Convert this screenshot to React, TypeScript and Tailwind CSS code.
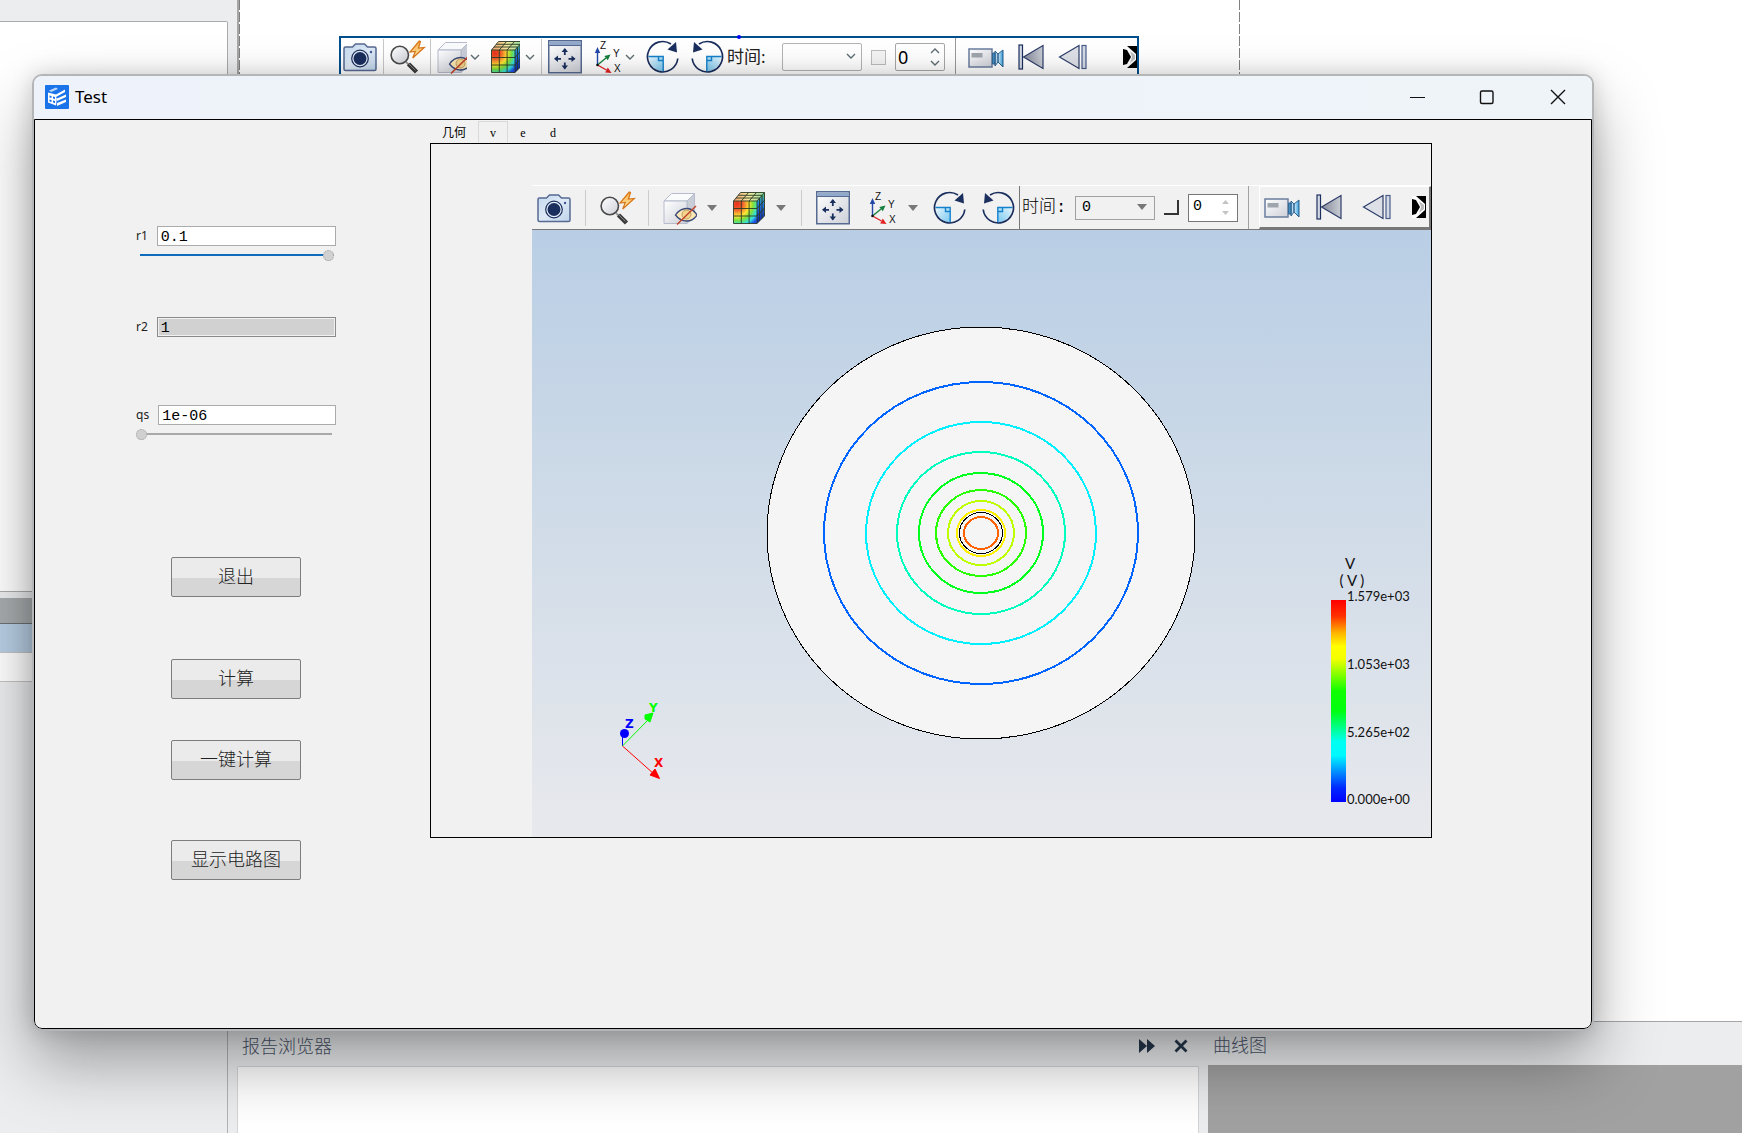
import { useState } from 'react'
import type { ReactNode } from 'react'

const NAVY = '#1b2f5e'

const Defs = () => (
  <svg width="0" height="0" className="absolute" aria-hidden="true">
    <defs>
      <linearGradient id="steel" x1="0" y1="0" x2="1" y2="1">
        <stop offset="0" stopColor="#c3d8ef" />
        <stop offset="0.5" stopColor="#dfeaf6" />
        <stop offset="1" stopColor="#bdd3ea" />
      </linearGradient>
      <linearGradient id="silver" x1="0" y1="0" x2="1" y2="1">
        <stop offset="0" stopColor="#ffffff" />
        <stop offset="1" stopColor="#cdd0d8" />
      </linearGradient>
      <linearGradient id="metal" x1="0" y1="0" x2="1" y2="0">
        <stop offset="0" stopColor="#84889a" />
        <stop offset="1" stopColor="#c9cdd4" />
      </linearGradient>
      <linearGradient id="lens" x1="0" y1="0" x2="1" y2="0">
        <stop offset="0" stopColor="#2b8cc4" />
        <stop offset="0.5" stopColor="#e8f7ff" />
        <stop offset="1" stopColor="#2d9ad8" />
      </linearGradient>
      <linearGradient id="quad" x1="0" y1="0" x2="1" y2="1">
        <stop offset="0" stopColor="#e3f4fd" />
        <stop offset="1" stopColor="#79c8f0" />
      </linearGradient>
      <linearGradient id="bolt" x1="0" y1="0" x2="0" y2="1">
        <stop offset="0" stopColor="#f7b04a" />
        <stop offset="1" stopColor="#ffe9a8" />
      </linearGradient>
      <radialGradient id="heat" gradientUnits="userSpaceOnUse" cx="5" cy="13" r="27">
        <stop offset="0" stopColor="#e8301c" />
        <stop offset="0.22" stopColor="#f0602c" />
        <stop offset="0.45" stopColor="#ffe432" />
        <stop offset="0.6" stopColor="#7fe03a" />
        <stop offset="0.78" stopColor="#2fe0e0" />
        <stop offset="0.92" stopColor="#2050e8" />
      </radialGradient>
      <linearGradient id="heatTop" x1="0" y1="0" x2="1" y2="0">
        <stop offset="0" stopColor="#f5a070" />
        <stop offset="0.5" stopColor="#f5eaa0" />
        <stop offset="1" stopColor="#8ee0a0" />
      </linearGradient>
      <linearGradient id="heatSide" x1="0" y1="0" x2="0" y2="1">
        <stop offset="0" stopColor="#58c860" />
        <stop offset="0.35" stopColor="#2080e0" />
        <stop offset="1" stopColor="#1018b0" />
      </linearGradient>
    </defs>
  </svg>
)

const Icon = ({ w = 34, clip = false, children }: { w?: number; clip?: boolean; children: ReactNode }) => (
  <svg
    width={w}
    height="34"
    viewBox={`0 0 ${w} 34`}
    fill="none"
    className={`block shrink-0 ${clip ? 'overflow-hidden' : 'overflow-visible'}`}
    aria-hidden="true"
  >
    {children}
  </svg>
)

const CameraIcon = () => (
  <Icon>
    <path d="M2.5 7H9.5L12.5 4H21.5L24.5 7H31.5Q33 7 33 8.5V29Q33 30.5 31.5 30.5H2.5Q1 30.5 1 29V8.500Q1 7 2.500 7Z" fill="url(#steel)" stroke="#566a92" strokeWidth="1.500" />
    <circle cx="17" cy="18.500" r="8.300" fill="#e6eef8" stroke={NAVY} strokeWidth="1.200" />
    <circle cx="17" cy="18.500" r="6.500" fill={NAVY} />
    <circle cx="28" cy="12" r="1.200" fill="#3c5a92" />
  </Icon>
)

const QuickZoomIcon = () => (
  <Icon>
    <path d="M16 22L19 25" stroke="#999" strokeWidth="2" />
    <path d="M18.500 24L26.500 32" stroke="#3a3a3a" strokeWidth="4.500" />
    <path d="M18.500 23.500L25.500 30.500" stroke="#888" strokeWidth="1" />
    <circle cx="9.800" cy="15" r="8.700" fill="url(#silver)" stroke="#4a4a4a" strokeWidth="1.600" />
    <path d="M29.300 1L20 12L25.300 11.500L22.700 18L34.300 7.500L28.500 8L30.500 1.500Z" fill="url(#bolt)" stroke="#d8761a" strokeWidth="1.200" />
  </Icon>
)

const HideIcon = ({ w = 34 }: { w?: number }) => (
  <Icon w={w} clip>
    <path d="M1 10L8.500 2.500H31.500L24 10Z" fill="#fafbfd" stroke="#b6bccd" />
    <path d="M24 10L31.500 2.500V25L24 32.500Z" fill="#c9cdd8" stroke="#b6bccd" />
    <path d="M1 10H24V32.500H1Z" fill="url(#silver)" stroke="#b6bccd" />
    <path d="M12.500 24Q17 17.500 23.500 17.500Q30 17.500 34 24Q30 30 23.500 30Q17 30 12.500 24Z" fill="#fbe7b4" stroke="#3b4a78" strokeWidth="1.300" />
    <circle cx="23.500" cy="23.500" r="4.500" fill="#f3d48c" stroke="#b08f5a" strokeWidth="0.800" />
    <path d="M14 33.500L33 15" stroke="#c2452a" strokeWidth="1.500" />
  </Icon>
)

const ContourIcon = ({ w = 34 }: { w?: number }) => (
  <Icon w={w} clip>
    <path d="M1.500 10L8.500 1.500H32.500L25 10Z" fill="url(#heatTop)" />
    <path d="M25 10L32.500 1.500V25L25 32.500Z" fill="url(#heatSide)" />
    <path d="M1.500 10H25V32.500H1.500Z" fill="url(#heat)" />
    <path
      d="M1.500 10H25V32.500H1.500ZM9.300 10V32.500M17.100 10V32.500M1.500 17.500H25M1.500 25H25M1.500 10L8.500 1.500H32.500L25 10M9.300 10L16.500 1.500M17.100 10L24.500 1.500M4 7H27.500V30M6.300 4.300H30V27.500M32.500 1.500V25L25 32.500M25 17.500L32.500 9.300M25 25L32.500 17"
      stroke="#2a3a24"
      strokeWidth="0.900"
    />
  </Icon>
)

const FitIcon = () => (
  <Icon>
    <rect x="0.750" y="0.750" width="32.500" height="32" fill="url(#silver)" stroke="#566a92" strokeWidth="1.500" />
    <rect x="1.500" y="1.500" width="31" height="3.500" fill="#93a9cb" />
    <path d="M1 5.500H33" stroke="#566a92" />
    <path d="M16.800 15V9M16.800 22.500V28.500M13 18.800H7M20.500 18.800H26.500" stroke={NAVY} strokeWidth="1.800" />
    <path d="M16.800 8L20 12H13.600ZM16.800 29.500L13.600 25.500H20ZM6 18.800L10 15.600V22ZM27.500 18.800L23.500 22V15.600Z" fill={NAVY} />
  </Icon>
)

const AxesIcon = () => (
  <Icon w={32}>
    <path d="M5.500 25V12" stroke="#2347a8" strokeWidth="1.400" />
    <path d="M5.500 7L8.200 13H2.800Z" fill="#2347a8" />
    <path d="M5.500 25L14 18" stroke="#14803c" strokeWidth="1.400" />
    <path d="M18.500 14.500L15.800 20.200L12.300 16Z" fill="#14803c" />
    <path d="M5.500 25L14.500 30" stroke="#e32222" strokeWidth="1.400" />
    <path d="M19.500 33L13.200 32.500L15.800 27.500Z" fill="#e32222" />
    <circle cx="5.500" cy="25" r="1.300" fill="#111" />
    <g className="font-['Liberation_Sans',sans-serif] text-[10px]" fill="#111">
      <text x="8" y="9">Z</text>
      <text x="21" y="17">Y</text>
      <text x="22" y="32">X</text>
    </g>
  </Icon>
)

const RotateIcon = ({ flip = false }: { flip?: boolean }) => (
  <Icon>
    <g transform={flip ? 'matrix(-1 0 0 1 34 0)' : undefined}>
      <path d="M16.200 16.500H2A15 15 0 0 0 16.200 31.500Z" fill="url(#quad)" />
      <path d="M1.500 16.500H16.200V31.500M11.500 16.500V20.500H16" stroke="#1580cc" strokeWidth="1.400" />
      <path d="M30.800 18.500A15.200 15.200 0 1 1 24 4" stroke={NAVY} strokeWidth="1.700" />
      <path d="M29 2L30 12.500L20.500 9.500Z" fill={NAVY} />
    </g>
  </Icon>
)

const VideoIcon = () => (
  <Icon w={36}>
    <rect x="1" y="9" width="23" height="18" fill="url(#silver)" stroke="#6a7c9e" strokeWidth="1.500" />
    <rect x="3.500" y="13" width="11" height="4.500" fill="#9fa5ad" />
    <path d="M24.700 13H27V24H24.700ZM27 11L30 14V22L27 26ZM30 14L35 10V27L30 22Z" fill="url(#lens)" stroke="#2a5f8e" />
  </Icon>
)

const FirstIcon = () => (
  <Icon w={26}>
    <rect x="1" y="5" width="3.500" height="24" fill="#d4dbe7" stroke={NAVY} strokeWidth="1.200" />
    <path d="M5.500 17L25 5.500V28.500Z" fill="url(#metal)" stroke="#2d3d6a" strokeWidth="1.200" />
  </Icon>
)

const BackIcon = () => (
  <Icon w={30}>
    <path d="M1.500 17L21 5.500V28.500Z" fill="#dde0e6" stroke="#2d3d6a" strokeWidth="1.200" />
    <rect x="24" y="5.500" width="4" height="23" fill="#d4dbe7" stroke="#4a5d8a" strokeWidth="1.200" />
  </Icon>
)

const MoreIcon = () => (
  <Icon w={14} clip>
    <rect y="6" width="14" height="22" fill="#000" />
    <path d="M0 6H4L13 14V20L4 28H0V25L7 17L0 9Z" fill="#fff" />
    <path d="M7 11L12 15V19L7 23L9 17Z" fill="#bbb" />
    <path d="M0 9L4 10L8 17L4 24L0 25Z" fill="#000" />
  </Icon>
)

const Chevron = ({ up = false }: { up?: boolean }) => (
  <svg width="10" height="6" viewBox="0 0 10 6" fill="none" className="block shrink-0" aria-hidden="true">
    <path d={up ? 'M1 5L5 1L9 5' : 'M1 1L5 5L9 1'} stroke="#5f6e74" strokeWidth="1.400" />
  </svg>
)

const Triangle = () => (
  <svg width="10" height="6" viewBox="0 0 10 6" className="block shrink-0" aria-hidden="true">
    <path d="M0 0H10L5 6Z" fill="#787878" />
  </svg>
)

const ToolButton = ({ label, children }: { label: string; children: ReactNode }) => (
  <button type="button" aria-label={label} className="flex shrink-0 items-center">
    {children}
  </button>
)

const EditorToolbar = () => (
  <div className="ml-[99px] mt-9 flex h-12 w-[800px] items-start overflow-hidden border-2 border-[#004f8c] font-['Noto_Sans','Noto_Sans_CJK_SC',sans-serif]">
    <div className="flex h-[38px] w-full shrink-0 items-center">
      <div className="flex h-full items-center gap-1.5 pl-0.5">
        <ToolButton label="camera"><CameraIcon /></ToolButton>
        <span className="h-9 w-px bg-[#c8c8c8]" />
        <ToolButton label="zoom"><QuickZoomIcon /></ToolButton>
        <span className="h-9 w-px bg-[#c8c8c8]" />
        <div className="flex items-center gap-[3px]">
          <ToolButton label="hide"><HideIcon w={30} /></ToolButton>
          <Chevron />
        </div>
        <div className="flex items-center gap-[5px] pl-1">
          <ToolButton label="contour"><ContourIcon w={30} /></ToolButton>
          <Chevron />
        </div>
        <span className="h-9 w-px bg-[#c8c8c8]" />
        <ToolButton label="fit"><FitIcon /></ToolButton>
        <div className="flex items-center gap-px pl-1">
          <ToolButton label="axes"><AxesIcon /></ToolButton>
          <Chevron />
        </div>
      </div>
      <div className="flex items-center gap-2 pl-3">
        <ToolButton label="rotate right"><RotateIcon /></ToolButton>
        <ToolButton label="rotate left"><RotateIcon flip /></ToolButton>
      </div>
      <label htmlFor="editor-time" className="w-[59px] shrink-0 whitespace-nowrap pl-1 text-[17px] text-[#222]">时间:</label>
      <div className="relative shrink-0">
        <select id="editor-time" className="block h-7 w-20 appearance-none rounded-xs border border-[#b4b4b4] bg-white/50 px-2">
          <option></option>
        </select>
        <span className="pointer-events-none absolute right-1.5 top-2.5"><Chevron /></span>
      </div>
      <input type="checkbox" aria-label="loop" className="ml-[9px] size-[15px] shrink-0 appearance-none border border-[#bdbdbd] bg-[#f4f4f4]" />
      <div className="ml-[9px] flex h-7 w-[50px] shrink-0 items-center rounded-xs border border-[#a8a8a8] bg-white/50 pr-1">
        <input aria-label="step" defaultValue="0" className="w-full min-w-0 bg-transparent pl-0.5 text-lg outline-none" />
        <span className="flex flex-col gap-1.5"><Chevron up /><Chevron /></span>
      </div>
      <span className="ml-2.5 h-full w-px shrink-0 bg-[#9a9a9a]" />
      <div className="flex items-center gap-3.5 pl-3">
        <ToolButton label="record"><VideoIcon /></ToolButton>
        <ToolButton label="first"><FirstIcon /></ToolButton>
        <ToolButton label="back"><BackIcon /></ToolButton>
      </div>
      <div className="ml-auto">
        <ToolButton label="more"><MoreIcon /></ToolButton>
      </div>
    </div>
  </div>
)

const ViewToolbar = () => (
  <div className="flex h-[45px] items-center overflow-hidden border-b border-t border-b-[#777] border-t-white bg-[#f1f1f1] font-['Liberation_Mono','Noto_Sans_CJK_SC',monospace]">
    <div className="flex shrink-0 items-center gap-3.5 pl-[5px]">
      <ToolButton label="camera"><CameraIcon /></ToolButton>
      <span className="h-9 w-px bg-[#ccc]" />
      <ToolButton label="zoom"><QuickZoomIcon /></ToolButton>
      <span className="h-9 w-px bg-[#ccc]" />
      <div className="flex items-center gap-[15px]">
        <div className="flex items-center gap-2.5">
          <ToolButton label="hide"><HideIcon /></ToolButton>
          <Triangle />
        </div>
        <div className="flex items-center gap-2.5">
          <ToolButton label="contour"><ContourIcon /></ToolButton>
          <Triangle />
        </div>
        <span className="h-9 w-px bg-[#ccc]" />
      </div>
      <ToolButton label="fit"><FitIcon /></ToolButton>
      <div className="flex items-center gap-[9px] pl-[3px]">
        <ToolButton label="axes"><AxesIcon /></ToolButton>
        <Triangle />
      </div>
      <div className="flex items-center gap-3 pl-0.5">
        <ToolButton label="rotate right"><RotateIcon /></ToolButton>
        <ToolButton label="rotate left"><RotateIcon flip /></ToolButton>
      </div>
    </div>
    <span className="ml-[5px] h-full w-px shrink-0 bg-[#777]" />
    <label htmlFor="view-time" className="w-[55px] shrink-0 whitespace-nowrap pl-0.5 text-[17px] font-light">时间:</label>
    <div className="relative shrink-0">
      <select id="view-time" className="block h-6 w-20 appearance-none border border-[#a0a0a0] bg-[#f1f1f1] px-1.5 text-[15px]">
        <option>0</option>
      </select>
      <span className="pointer-events-none absolute right-2 top-2"><Triangle /></span>
    </div>
    <input type="checkbox" aria-label="loop" className="ml-[9px] size-[15px] shrink-0 appearance-none border-b-2 border-r-2 border-[#333]" />
    <div className="ml-[9px] flex h-7 w-[50px] shrink-0 items-center border border-[#777] bg-white pr-2">
      <input aria-label="step" defaultValue="0" className="w-full min-w-0 bg-transparent pl-1 text-[15px] outline-none" />
      <svg width="7" height="15" viewBox="0 0 7 15" className="shrink-0" aria-hidden="true">
        <path d="M0 4L3.500 0L7 4ZM0 11H7L3.500 15Z" fill="#c4c4c4" />
      </svg>
    </div>
    <span className="ml-2.5 h-full w-px shrink-0 bg-[#a0a0a0]" />
    <div className="ml-2.5 flex h-full min-w-0 flex-1 items-center overflow-hidden border border-b-2 border-r-2 border-[#777] border-l-white border-t-white pl-1">
      <ToolButton label="record"><VideoIcon /></ToolButton>
      <div className="flex shrink-0 items-center gap-5 pl-4">
        <ToolButton label="first"><FirstIcon /></ToolButton>
        <ToolButton label="back"><BackIcon /></ToolButton>
        <ToolButton label="more"><MoreIcon /></ToolButton>
      </div>
    </div>
  </div>
)

const CONTOURS = [
  { rx: 157, ry: 151, color: '#0064ff' },
  { rx: 115, ry: 111, color: '#00f0ff' },
  { rx: 84, ry: 81, color: '#00ffbe' },
  { rx: 62, ry: 60, color: '#00ff1e' },
  { rx: 45, ry: 43, color: '#28ff00' },
  { rx: 33, ry: 32, color: '#beff00' },
  { rx: 24, ry: 23, color: '#fff000' },
  { rx: 17, ry: 16, color: '#ff6400' },
]

const TICKS = [
  { y: 371, label: '1.579e+03' },
  { y: 439, label: '1.053e+03' },
  { y: 507, label: '5.265e+02' },
  { y: 574, label: '0.000e+00' },
]

const FieldPlot = () => (
  <svg viewBox="0 0 899 607" className="block h-auto w-full">
    <defs>
      <linearGradient id="sky" x1="0" y1="0" x2="0" y2="1">
        <stop offset="0" stopColor="#b9cee5" />
        <stop offset="0.5" stopColor="#d1dce8" />
        <stop offset="1" stopColor="#e8e9ed" />
      </linearGradient>
      <linearGradient id="scale" x1="0" y1="0" x2="0" y2="1">
        <stop offset="0" stopColor="#ff0000" />
        <stop offset="0.08" stopColor="#ff3000" />
        <stop offset="0.16" stopColor="#ffb000" />
        <stop offset="0.23" stopColor="#ffff00" />
        <stop offset="0.29" stopColor="#f4ff00" />
        <stop offset="0.45" stopColor="#10ff00" />
        <stop offset="0.55" stopColor="#00ff10" />
        <stop offset="0.7" stopColor="#00fff0" />
        <stop offset="0.77" stopColor="#00f8ff" />
        <stop offset="0.93" stopColor="#0028ff" />
        <stop offset="1" stopColor="#0000ff" />
      </linearGradient>
    </defs>
    <rect width="899" height="607" fill="url(#sky)" />
    <g shapeRendering="crispEdges" fill="none">
      <ellipse cx="449" cy="303" rx="214" ry="206" fill="#f5f5f5" stroke="#000" />
      {CONTOURS.map((c) => (
        <ellipse key={c.color} cx="449" cy="303" rx={c.rx} ry={c.ry} stroke={c.color} strokeWidth="2" />
      ))}
      <ellipse cx="449" cy="303" rx="21.500" ry="20.500" stroke="#000" />
    </g>
    <g className="font-['DejaVu_Sans',sans-serif] text-[12px] font-bold">
      <path d="M90.500 516V505" stroke="#00f" />
      <circle cx="92.500" cy="503.500" r="4.500" fill="#00f" />
      <path d="M90.500 516L116 490" stroke="#0f0" />
      <path d="M121 483L118 492L113 489V485Z" fill="#0f0" stroke="#0f0" />
      <path d="M90.500 516L122 544" stroke="#f00" />
      <path d="M127.500 548.500L118 545L123 539Z" fill="#f00" stroke="#f00" />
      <text x="93" y="498" fill="#00f">Z</text>
      <text x="117" y="482" fill="#0f0">Y</text>
      <text x="122" y="537" fill="#f00">X</text>
    </g>
    <rect x="799" y="370" width="15" height="202" fill="url(#scale)" />
    <g className="font-[Lato,sans-serif] text-[13px]" fill="#111">
      <text x="818" y="339" textAnchor="middle" className="text-[15px]">V</text>
      <text x="820" y="356" textAnchor="middle" className="text-[15px]">( V )</text>
      {TICKS.map((t) => (
        <text key={t.label} x="815" y={t.y}>{t.label}</text>
      ))}
    </g>
  </svg>
)

const Slider = ({ label, initial }: { label: string; initial: number }) => {
  const [value, setValue] = useState(initial)
  const track = `linear-gradient(to right, transparent 4px, #0f6cbd 4px, #0f6cbd ${value}%, #a9a9a9 ${value}%, #a9a9a9 calc(100% - 2px), transparent calc(100% - 2px))`
  return (
    <input
      type="range"
      aria-label={label}
      value={value}
      onChange={(e) => setValue(Number(e.target.value))}
      style={{ backgroundImage: value > 0 ? track : track.replaceAll('#0f6cbd', '#a9a9a9') }}
      className="mt-2 block h-0.5 w-[198px] appearance-none [&::-webkit-slider-thumb]:size-[11px] [&::-webkit-slider-thumb]:appearance-none [&::-webkit-slider-thumb]:rounded-full [&::-webkit-slider-thumb]:border [&::-webkit-slider-thumb]:border-dotted [&::-webkit-slider-thumb]:border-[#a0a0a0] [&::-webkit-slider-thumb]:bg-[#d0d0d0]"
    />
  )
}

const Field = ({ id, value, disabled = false }: { id: string; value: string; disabled?: boolean }) => (
  <div className="flex w-[200px] items-center gap-[9px]">
    <label htmlFor={id} className="text-[12px] text-[#222]">{id}</label>
    <input
      id={id}
      defaultValue={value}
      readOnly={disabled}
      className={
        disabled
          ? 'h-5 w-full min-w-0 border border-[#8a8a8a] bg-[#d1d1d1] px-[3px] pt-0.5 font-["Liberation_Mono",monospace] text-[15px] leading-4 outline-none ring-1 ring-inset ring-[#f1f1f1]'
          : 'h-5 w-full min-w-0 border border-[#ababab] bg-white px-[3px] pt-0.5 font-["Liberation_Mono",monospace] text-[15px] leading-4 outline-none'
      }
    />
  </div>
)

const PushButton = ({ children }: { children: ReactNode }) => (
  <button
    type="button"
    className="h-10 w-[130px] rounded-xs border border-[#7d7d7d] bg-linear-to-b from-[#ebebeb] from-52% to-[#d6d6d6] to-52% pb-0.5 text-[18px] font-light leading-8 text-[#222]"
  >
    {children}
  </button>
)

const TABS = ['几何', 'v', 'e', 'd']

const AppLogo = () => (
  <svg width="24" height="24" viewBox="0 0 24 24" className="block" aria-hidden="true">
    <rect width="24" height="24" rx="1" fill="#1a73e8" />
    <path d="M4 5.500L11 2.500L13 4L6 7Z" fill="#bcd6fa" />
    <path d="M3 7.500L11 9.500V20.500L3 17.500Z" fill="#fff" />
    <path d="M11 9.500L20 4.500V7L11 12ZM11 12L12 21L21 17V14.500L12 18V16L21 12V9.500L12 13.500Z" fill="#fff" />
    <path d="M4.500 10.500L6.500 11V13L4.500 12.500ZM4.500 14.500L6.500 15V17L4.500 16.500ZM8 11.500L10 12V14L8 13.500ZM8 15.500L10 16V18L8 17.500Z" fill="#1a73e8" />
  </svg>
)

const TestWindow = () => {
  const [active, setActive] = useState('v')

  return (
    <section className="absolute left-8 right-[148px] top-[74px] overflow-hidden rounded-[10px] border-2 border-[#b3b5b7] bg-[#f1f1f1] shadow-[0_32px_64px_rgba(0,0,0,0.34),0_0_22px_rgba(0,0,0,0.16)]">
      <header className="flex h-[43px] items-center justify-between bg-linear-to-r from-[#eef3fb] to-[#eff4f9] pb-0.5 pl-[11px] pr-5 font-['Noto_Sans',sans-serif]">
        <div className="flex items-center gap-1.5">
          <AppLogo />
          <h1 className="text-[17px] leading-6">Test</h1>
        </div>
        <div className="flex items-center gap-[47px]">
          <button type="button" aria-label="minimize" className="w-6">
            <svg width="24" height="24" viewBox="0 0 24 24" className="block"><path d="M4 12.500H19" stroke="#111" strokeWidth="1.200" /></svg>
          </button>
          <button type="button" aria-label="maximize" className="w-6">
            <svg width="24" height="24" viewBox="0 0 24 24" className="block" fill="none"><rect x="3.500" y="6" width="12.500" height="12.500" rx="1.500" stroke="#111" strokeWidth="1.400" /></svg>
          </button>
          <button type="button" aria-label="close" className="w-6">
            <svg width="24" height="24" viewBox="0 0 24 24" className="block"><path d="M3 5L17 19M17 5L3 19" stroke="#111" strokeWidth="1.400" /></svg>
          </button>
        </div>
      </header>

      <div className="flex rounded-b-[8px] border border-black pb-[148px]">
        <form className="flex w-[395px] shrink-0 flex-col pl-[101px] pt-[106px] font-['Noto_Sans','Noto_Sans_CJK_SC',sans-serif]">
          <Field id="r1" value="0.1" />
          <Slider label="r1 value" initial={100} />
          <div className="mt-[61px]">
            <Field id="r2" value="1" disabled />
          </div>
          <div className="mt-[68px]">
            <Field id="qs" value="1e-06" />
            <Slider label="qs value" initial={0} />
          </div>
          <div className="mt-[122px] flex flex-col pl-[35px]">
            <PushButton>退出</PushButton>
            <div className="mt-[62px] flex flex-col gap-[41px]">
              <PushButton>计算</PushButton>
              <PushButton>一键计算</PushButton>
            </div>
            <div className="mt-[60px]">
              <PushButton>显示电路图</PushButton>
            </div>
          </div>
        </form>

        <div className="mr-[159px] min-w-0 flex-1">
          <div role="tablist" className="flex h-[23px] items-end font-['Liberation_Serif','Noto_Sans_CJK_SC',serif] text-[12px]">
            {TABS.map((tab) => (
              <button
                key={tab}
                type="button"
                role="tab"
                aria-selected={tab === active}
                onClick={() => setActive(tab)}
                className={`h-[22px] border pt-0.5 leading-[18px] ${tab.length > 1 ? 'w-12' : 'w-[30px]'} ${tab === active ? 'border-[#d9d9d9] border-b-[#f1f1f1]' : 'border-transparent'}`}
              >
                {tab}
              </button>
            ))}
          </div>
          <div className="border border-black pl-[101px] pt-[41px]">
            <ViewToolbar />
            <FieldPlot />
          </div>
        </div>
      </div>
    </section>
  )
}

export default function App() {
  return (
    <div className="relative flex min-h-screen overflow-hidden bg-[#ebedef] font-['Noto_Sans','Noto_Sans_CJK_SC',sans-serif] text-black">
      <Defs />
      <aside className="flex w-[228px] shrink-0 flex-col">
        <div className="mt-[21px] h-[571px] rounded-tr-xs border-b border-r border-t border-[#a9acae] bg-white" />
        <div className="mt-1.5 h-[26px] border-b border-[#6d6f70] bg-[#a8acae]" />
        <div className="h-7 bg-[#b8cfe4]" />
        <div className="h-[30px] border-b border-t border-[#c4c4c4] bg-white" />
        <div className="flex-1 border-r border-[#b0b2b4]" />
      </aside>

      <main className="ml-[9px] flex min-w-0 flex-1 flex-col">
        <div className="relative flex h-[1022px] border-b border-l-2 border-[#a6a6a6] bg-white">
          <span className="w-px shrink-0 bg-[repeating-linear-gradient(to_bottom,#808080_0_10px,#fff_10px_12px)]" />
          <div className="w-[999px] shrink-0">
            <EditorToolbar />
          </div>
          <span className="w-px shrink-0 bg-[repeating-linear-gradient(to_bottom,#808080_0_10px,#fff_10px_12px)]" />
          <span className="absolute left-[498px] top-[35px] size-1 rounded-full bg-[#0000ff]" />
        </div>
        <div className="flex flex-1">
          <div className="flex w-[962px] shrink-0 flex-col">
            <div className="flex h-11 items-center justify-between pl-[5px] pr-2.5 pt-1 text-[18px] text-[#4b566b]">
              <h2 className="font-light">报告浏览器</h2>
              <div className="flex items-center gap-[18px]">
                <button type="button" aria-label="expand">
                  <svg width="16" height="16" viewBox="0 0 16 16" className="block"><path d="M0 1L8 8V1L16 8L8 15V8L0 15Z" fill="#25384d" /></svg>
                </button>
                <button type="button" aria-label="close panel">
                  <svg width="16" height="16" viewBox="0 0 16 16" className="block"><path d="M2.500 2.500L13.500 13.500M13.500 2.500L2.500 13.500" stroke="#25384d" strokeWidth="2.800" /></svg>
                </button>
              </div>
            </div>
            <div className="flex-1 rounded-t-xs border-l border-r border-t border-[#d2d4d6] bg-white" />
          </div>
          <div className="ml-[9px] flex min-w-0 flex-1 flex-col">
            <h2 className="flex h-[43px] items-center pl-[5px] pt-1 text-[18px] font-light text-[#4b566b]">曲线图</h2>
            <div className="flex-1 bg-[#a1a1a1]" />
          </div>
        </div>
      </main>

      <TestWindow />
    </div>
  )
}
